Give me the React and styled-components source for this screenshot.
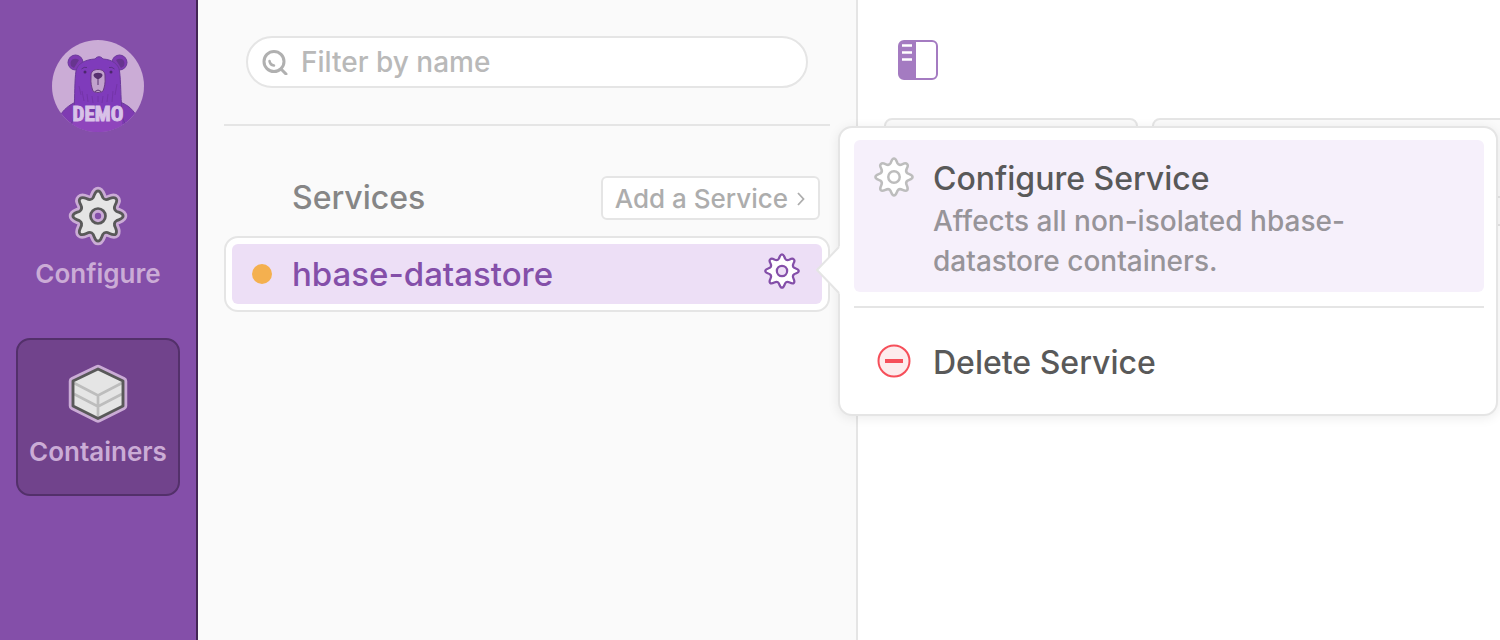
import React from "react";
import styled, { createGlobalStyle } from "styled-components";

const GlobalStyle = createGlobalStyle`
  *, *::before, *::after { box-sizing: border-box; }
  body {
    margin: 0;
    background: #fff;
    font-family: Inter, Roboto, "Liberation Sans", sans-serif;
    font-weight: 450;
    color: #595959;
  }
  button, input { font: inherit; color: inherit; }
  h1, p { margin: 0; font-weight: inherit; }
`;

const Page = styled.div`
  display: flex;
  min-height: 100vh;
  overflow: hidden;
`;

const Sidebar = styled.nav`
  flex: none;
  width: 198px;
  padding: 40px 16px 0;
  border-right: 2px solid #432654;
  background: #844fa9;
  display: flex;
  flex-direction: column;
  align-items: center;
`;

const Avatar = styled.svg`
  display: block;
  width: 92px;
  height: 92px;
  margin-bottom: 28px;
`;

const NavLink = styled.a`
  width: 164px;
  height: 158px;
  margin-bottom: ${(p) => (p.$active ? "0" : "20px")};
  padding-top: 24px;
  border: 2px solid ${(p) => (p.$active ? "#53306a" : "transparent")};
  border-radius: 14px;
  background: ${(p) => (p.$active ? "#71438c" : "transparent")};
  display: flex;
  flex-direction: column;
  align-items: center;
  gap: 10px;
  color: #cbacd6;
  font-size: 26px;
  line-height: 36px;
  font-weight: 600;
  text-decoration: none;
`;

const Icon = styled.svg`
  display: block;
  flex: none;
  width: ${(p) => p.$size}px;
  height: ${(p) => p.$size}px;
`;

const ListPane = styled.section`
  flex: none;
  width: 660px;
  padding: 36px 26px 0;
  border-right: 2px solid #e5e5e5;
  background: #fafafa;
`;

const Search = styled.label`
  display: flex;
  align-items: center;
  gap: 13px;
  height: 52px;
  margin: 0 22px 36px;
  padding: 0 14px;
  border: 2px solid #e5e5e5;
  border-radius: 26px;
  background: #fff;
  color: #b0b0b0;
`;

const SearchInput = styled.input`
  flex: 1;
  min-width: 0;
  padding: 0;
  border: 0;
  outline: 0;
  background: transparent;
  font-size: 28px;
  line-height: 40px;
  &::placeholder { color: #b9b9b9; opacity: 1; }
`;

const Rule = styled.hr`
  height: 2px;
  margin: 0;
  border: 0;
  background: #e5e5e5;
`;

const ListHeader = styled.header`
  display: flex;
  align-items: center;
  justify-content: space-between;
  padding: 50px 10px 16px 68px;
`;

const ListTitle = styled.h1`
  color: #868686;
  font-size: 32px;
  line-height: 44px;
`;

const AddButton = styled.button`
  display: flex;
  align-items: center;
  gap: 8px;
  height: 44px;
  padding: 0 12px;
  border: 2px solid #e5e5e5;
  border-radius: 6px;
  background: #fff;
  color: #adadad;
  font-size: 26px;
  white-space: nowrap;
`;

const ServiceCard = styled.div`
  position: relative;
  padding: 6px;
  border: 2px solid #e5e5e5;
  border-radius: 14px;
  background: #fff;
`;

const ServiceRow = styled.div`
  display: flex;
  align-items: center;
  height: 60px;
  padding: 0 22px 0 20px;
  border-radius: 6px;
  background: #eddff6;
`;

const StatusDot = styled.span`
  width: 20px;
  height: 20px;
  margin-right: 20px;
  border-radius: 50%;
  background: #f4b04f;
`;

const ServiceName = styled.a`
  flex: 1;
  color: #844fa9;
  font-size: 33px;
  line-height: 44px;
  text-decoration: none;
`;

const IconButton = styled.button`
  padding: 0;
  border: 0;
  background: transparent;
`;

const RowAction = styled(IconButton)`
  padding-bottom: 6px;
`;

const Popover = styled.div`
  position: absolute;
  z-index: 2;
  top: -112px;
  left: calc(100% + 10px);
  width: 660px;
  padding: 12px 12px 14px 14px;
  border: 2px solid #e5e5e5;
  border-radius: 14px;
  background: #fff;
  box-shadow: 0 2px 12px rgba(0, 0, 0, 0.08);
`;

const PopoverArrow = styled.svg`
  position: absolute;
  top: 116px;
  left: -24px;
  width: 24px;
  height: 52px;
`;

const MenuItem = styled.button`
  display: flex;
  width: 100%;
  padding: ${(p) => (p.$highlighted ? "17px 80px 11px 20px" : "33px 20px 15px")};
  border: 0;
  border-radius: 6px;
  background: ${(p) => (p.$highlighted ? "#f6f0fb" : "transparent")};
  gap: 19px;
  text-align: left;
`;

const MenuTitle = styled.span`
  display: block;
  color: #595959;
  font-size: 32px;
  line-height: 44px;
`;

const MenuNote = styled.span`
  display: block;
  color: #979499;
  font-size: 28px;
  line-height: 40px;
`;

const MenuRule = styled(Rule)`
  margin-top: 14px;
`;

const Detail = styled.main`
  flex: 1;
  min-width: 0;
  padding: 40px 0 0 26px;
`;

const PaneToggle = styled(IconButton)`
  display: block;
  margin: 0 0 38px 14px;
`;

const Panels = styled.div`
  display: grid;
  grid-template-columns: 254px minmax(400px, 1fr);
  gap: 14px;
`;

const Panel = styled.div`
  height: 108px;
  border: 2px solid #e5e5e5;
  border-radius: 8px;
  background: #fafafa;
`;

const PanelHeading = styled.div`
  height: 78px;
  border-bottom: 2px solid #e5e5e5;
`;

const GEAR =
  "M30 4C33 4 33.500 8 35 11C36.500 13.500 39 13.500 42 12C45 10.500 47 10.500 48.500 12C50 13.500 49.500 15.500 48 18C46.500 21 46.500 23.500 49 25C52 26.500 56 27 56 30C56 33 52 33.500 49 35C46.500 36.500 46.500 39 48 42C49.500 45 49.500 47 48.500 48.500C47 50 45 49.500 42 48C39 46.500 36.500 46.500 35 49C33.500 52 33 56 30 56C27 56 26.500 52 25 49C23.500 46.500 21 46.500 18 48C15 49.500 13 50 11.500 48.500C10 47 10.500 45 12 42C13.500 39 13.500 36.500 11 35C8 33.500 4 33 4 30C4 27 8 26.500 11 25C13.500 23.500 13.500 21 12 18C10.500 15.500 10 13.500 11.500 12C13 10.500 15 10.500 18 12C21 13.500 23.500 13.500 25 11C26.500 8 27 4 30 4Z";

function GearIcon({ size, stroke, hub = "#fff" }) {
  return (
    <Icon $size={size} viewBox="2 2 56 56" aria-hidden="true">
      <path d={GEAR} fill="#fff" stroke={stroke} strokeWidth="3.500" strokeLinejoin="round" />
      <circle cx="30" cy="30" r="8" fill={hub} stroke={stroke} strokeWidth="3.500" />
    </Icon>
  );
}

function NavGearIcon() {
  return (
    <Icon $size={60} viewBox="0 0 60 60" aria-hidden="true">
      <g transform="translate(1 1) scale(.967)">
        <path d={GEAR} fill="#cbacd6" stroke="#cbacd6" strokeWidth="8.500" strokeLinejoin="round" />
        <path d={GEAR} fill="#e5e5e5" stroke="#595959" strokeWidth="2.900" strokeLinejoin="round" />
      </g>
      <circle cx="30" cy="30" r="7.500" fill="#cbacd6" stroke="#595959" strokeWidth="2.700" />
      <circle cx="30" cy="30" r="3.200" fill="#844fa9" />
    </Icon>
  );
}

function ContainerIcon() {
  const hex = "M30 5L55 17V42L30 54.500L5 42V17Z";
  return (
    <Icon $size={60} viewBox="0 0 60 60" aria-hidden="true">
      <path d={hex} fill="#cbacd6" stroke="#cbacd6" strokeWidth="8.500" strokeLinejoin="round" />
      <path d={hex} fill="#e5e5e5" />
      <path d="M6 19L30 31.500L54 19M6 30L30 42.500L54 30M30 31V53" fill="none" stroke="#bdbdbd" strokeWidth="2.700" />
      <path d={hex} fill="none" stroke="#595959" strokeWidth="2.900" strokeLinejoin="round" />
    </Icon>
  );
}

function BearAvatar() {
  return (
    <Avatar viewBox="0 0 92 92" role="img" aria-label="Demo">
      <defs>
        <clipPath id="avatar-disc">
          <circle cx="46" cy="46" r="46" />
        </clipPath>
      </defs>
      <g clipPath="url(#avatar-disc)">
        <rect width="92" height="92" fill="#cbacd6" />
        <g stroke="#6b3a9a" strokeWidth="1">
          <path d="M8 76C11 70 17 65 24 62L68 62C76 65 82 70 86 79L78 96H14Z" fill="#7f3bb2" />
          <circle cx="23.500" cy="22.500" r="7.500" fill="#7f3bb2" />
          <circle cx="67.500" cy="22.500" r="7.500" fill="#7f3bb2" />
          <path d="M19 26C17 20 22 17 27 20L22 28Z" fill="#67358f" stroke="none" />
          <path d="M72 26C74 20 69 17 64 20L69 28Z" fill="#67358f" stroke="none" />
          <path d="M22 70C23 55 22.500 40 24 31C25.500 23 34 19.500 43 19C45 16 49 16 51 19C60 19.500 66.500 24 67.500 31C69 42 68.500 56 70 70Z" fill="#7f3bbb" />
        </g>
        <path d="M22 78H70V96H16Z" fill="#8f45bc" />
        <path d="M22 76L17 92M70 76L76 92" stroke="#6b3a9a" strokeWidth="1" fill="none" />
        <path d="M27 46L29 55M30 51L32 61M35 54L36 62M65 44L63 55M61 51L60 62M56 54L55 62M40 56L41 63M51 56L50 63M46 56V62" stroke="#7435a8" strokeWidth="1" fill="none" />
        <path d="M39 37C38.500 31 42 29.500 46 29.500C50 29.500 53.500 31 53 37C53.500 43 52.500 47 51 51C49 53 43 53 41 51C39.500 47 38.500 43 39 37Z" fill="#c2a2cd" stroke="#6b3b86" strokeWidth="1" />
        <path d="M41.500 35C42 32 50 32 50.500 35C50.500 37 47.500 39 46 39C44.500 39 41.500 37 41.500 35Z" fill="#57306f" />
        <path d="M46 39V45M43 51.500Q46 48.500 49 51.500" stroke="#57306f" strokeWidth="1" fill="none" />
        <path d="M29.500 29Q32 26.500 35 27.500M57 27.500Q60 26.500 62.500 29" stroke="#5e3187" strokeWidth="1" fill="none" />
        <circle cx="33" cy="32" r="1.500" fill="#4b286d" />
        <circle cx="59" cy="32" r="1.500" fill="#4b286d" />
      </g>
      <text
        x="46"
        y="81"
        textAnchor="middle"
        fill="#d9c2e8"
        stroke="#d9c2e8"
        strokeWidth="1"
        fontFamily='"Roboto Condensed", "Open Sans Condensed", "Liberation Sans Narrow", sans-serif'
        fontWeight="700"
        fontSize="21"
      >
        DEMO
      </text>
    </Avatar>
  );
}

export default function App() {
  return (
    <>
      <GlobalStyle />
      <Page>
        <Sidebar aria-label="Primary">
          <BearAvatar />
          <NavLink href="#configure">
            <NavGearIcon />
            Configure
          </NavLink>
          <NavLink href="#containers" $active aria-current="page">
            <ContainerIcon />
            Containers
          </NavLink>
        </Sidebar>

        <ListPane>
          <Search>
            <Icon $size={26} viewBox="0 0 26 26" fill="none" stroke="currentColor" strokeLinecap="round" aria-hidden="true">
              <circle cx="12" cy="12.500" r="10" strokeWidth="3" />
              <path d="M19 20L24 25" strokeWidth="3" />
              <path d="M7.500 12Q8 16 12 16.500" strokeWidth="2.500" />
            </Icon>
            <SearchInput type="text" placeholder="Filter by name" aria-label="Filter by name" />
          </Search>
          <Rule />
          <ListHeader>
            <ListTitle>Services</ListTitle>
            <AddButton type="button">
              Add a Service
              <svg width="10" height="16" viewBox="0 0 10 16" fill="none" stroke="currentColor" strokeWidth="1.800" aria-hidden="true">
                <path d="M2 3L7.500 9L2 15" />
              </svg>
            </AddButton>
          </ListHeader>
          <ServiceCard>
            <ServiceRow>
              <StatusDot />
              <ServiceName href="#hbase-datastore">hbase-datastore</ServiceName>
              <RowAction type="button" aria-label="Service options">
                <GearIcon size={36} stroke="#844fa9" hub="#eddff6" />
              </RowAction>
            </ServiceRow>
            <Popover>
              <PopoverArrow viewBox="0 0 24 52" aria-hidden="true">
                <path d="M24 2L1 26L24 50Z" fill="#fff" />
                <path d="M23 3L1 26L23 49" fill="none" stroke="#e5e5e5" strokeWidth="2" />
              </PopoverArrow>
              <MenuItem type="button" $highlighted>
                <GearIcon size={40} stroke="#bdbdbd" />
                <span>
                  <MenuTitle>Configure Service</MenuTitle>
                  <MenuNote>Affects all non-isolated hbase-datastore containers.</MenuNote>
                </span>
              </MenuItem>
              <MenuRule />
              <MenuItem type="button">
                <Icon $size={40} viewBox="0 0 40 40" aria-hidden="true">
                  <circle cx="20" cy="20" r="15.500" fill="#fdeced" stroke="#f64f5a" strokeWidth="2" />
                  <path d="M11 20H29" stroke="#f64f5a" strokeWidth="4" />
                </Icon>
                <MenuTitle>Delete Service</MenuTitle>
              </MenuItem>
            </Popover>
          </ServiceCard>
        </ListPane>

        <Detail>
          <PaneToggle type="button" aria-label="Toggle list">
            <Icon $size={40} viewBox="0 0 40 40" aria-hidden="true">
              <rect x="1" y="1" width="38" height="38" rx="5" fill="#fff" stroke="#a47bc1" strokeWidth="2" />
              <path d="M6 1H18V39H6A5 5 0 0 1 1 34V6A5 5 0 0 1 6 1Z" fill="#a47bc1" />
              <path d="M4 5.500H14M4 12.500H14M4 19.500H14" stroke="#fff" strokeWidth="2.500" />
            </Icon>
          </PaneToggle>
          <Panels>
            <Panel />
            <Panel>
              <PanelHeading />
            </Panel>
          </Panels>
        </Detail>
      </Page>
    </>
  );
}
